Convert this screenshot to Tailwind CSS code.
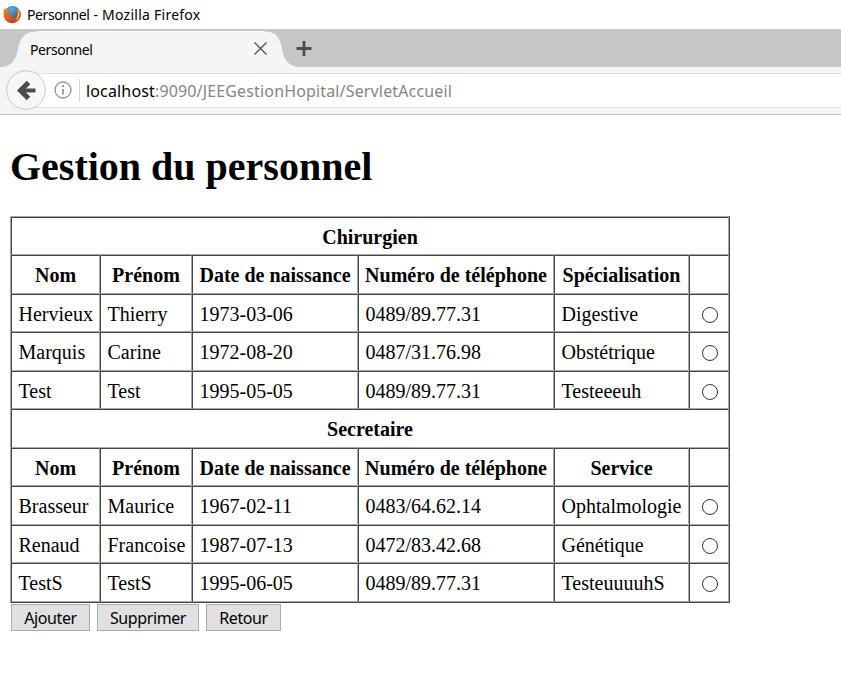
<!DOCTYPE html>
<html lang="fr">
<head>
<meta charset="utf-8">
<title>Personnel</title>
<script src="https://cdn.jsdelivr.net/npm/@tailwindcss/browser@4"></script>
</head>
<body class="w-[841px] h-[681px] overflow-hidden bg-white text-black font-['Noto_Sans',sans-serif]">
<header class="h-[115px] bg-[#f5f5f5] border-b border-[#c2c2c2]">
  <div class="h-[29px] bg-white flex items-center pl-[3px]">
    <svg class="w-[19px] h-[19px] shrink-0" viewBox="0 0 19 19">
      <defs>
        <linearGradient id="fox" x1="0" y1="0" x2="0.6" y2="1"><stop offset="0" stop-color="#f08a24"/><stop offset="0.55" stop-color="#e2601c"/><stop offset="1" stop-color="#b8402a"/></linearGradient>
        <radialGradient id="globe" cx="0.45" cy="0.2" r="0.8"><stop offset="0" stop-color="#58b4e0"/><stop offset="1" stop-color="#173f80"/></radialGradient>
      </defs>
      <circle cx="9.4" cy="9.2" r="8.2" fill="url(#globe)"/>
      <path d="M1 3 L2.6 4.4 L4.4 4 Q5.400 5.400 7 6 Q6.600 7.200 5.400 7.600 Q5.400 9.800 7.800 10.400 Q9.800 10.800 11 10 Q10.400 12.200 8.600 12.600 Q12.600 13.600 14 9.800 Q14.800 6 13.400 2.800 Q16.400 4.600 17 7.400 L17.600 6.400 Q18.600 12 15.200 15.600 Q12 18.800 7.400 18 Q2.400 16.800 0.900 12 Q0 7 1 3Z" fill="url(#fox)"/>
      <path d="M14.2 3.6 Q17 6.600 16.600 10.600 Q15.600 14.400 12.400 15.600 Q15 12 15.200 8.600 Z" fill="#fbc040"/>
    </svg>
    <span class="ml-[5px] text-[14px] leading-[20px] whitespace-nowrap"><span class="tracking-[-0.4px]">Personnel</span><span class="tracking-[0.25px]"> - Mozilla Firefox</span></span>
  </div>
  <div class="h-[38px] bg-[#c6c6c6] grid">
    <svg class="w-[841px] h-[38px] [grid-area:1/1]" viewBox="0 0 841 38">
      <path d="M0 38 C11 38 16 31 18 20 C20 8 25 2.5 38 2.5 L264 2.5 C276 2.5 280 8 282 20 C284 31 289 38 300 38 Z" fill="#f5f5f5"/>
      <path d="M38 2.5 L264 2.5" stroke="#fdfdfd"/>
      <path d="M254.5 13.5 L266.500 25.500 M266.500 13.500 L254.500 25.500" stroke="#555" stroke-width="1.4"/>
      <path d="M304 12 V27 M296.500 19.500 H311.500" stroke="#4c4c4c" stroke-width="2.8"/>
    </svg>
    <span class="[grid-area:1/1] pl-[30px] pt-[11px] text-[14px] leading-[20px] tracking-[-0.4px]">Personnel</span>
  </div>
  <div class="h-[47px] grid">
    <div class="[grid-area:1/1] mt-[6px] ml-[26px] h-[35px] bg-white border-y border-[#dedede]"></div>
    <div class="[grid-area:1/1] flex items-start">
      <svg class="w-[86px] h-[47px] shrink-0" viewBox="0 0 86 47">
        <circle cx="26" cy="23" r="19.300" fill="#f7f7f7" stroke="#c8c8c8"/>
        <path d="M35.500 23.500 H22" fill="none" stroke="#4c4c4c" stroke-width="4"/>
        <path d="M28.500 15.500 L20.500 23.500 L28.500 31.500" fill="none" stroke="#4c4c4c" stroke-width="5"/>
        <circle cx="63" cy="23" r="8" fill="none" stroke="#949494" stroke-width="1.300"/>
        <path d="M63 22 V27.500 M63 18 V20" stroke="#949494" stroke-width="1.800"/>
        <path d="M79.500 12 V35" stroke="#d4d4d4"/>
      </svg>
      <span class="pt-[12px] text-[16px] leading-[24px] whitespace-nowrap text-[#858585] tracking-[0.15px]"><span class="text-black">localhost</span>:9090/JEEGestionHopital/ServletAccueil</span>
    </div>
  </div>
</header>
<main class="pl-[10px] font-['Liberation_Serif',serif]">
  <h1 class="pt-[29px] text-[40px] leading-[46px] font-bold">Gestion du personnel</h1>
  <table class="mt-[26px] w-[720px] table-fixed border-separate border-spacing-0 border border-t-[#a8a8a8] border-l-[#a8a8a8] border-r-[#444] border-b-[#444] text-[20px] leading-[22px] [&_td]:border [&_td]:p-0 [&_td]:pt-[1px] [&_td]:pl-[6.5px] [&_td]:border-t-[#444] [&_td]:border-l-[#444] [&_td]:border-r-[#a8a8a8] [&_td]:border-b-[#a8a8a8] [&_th]:border [&_th]:p-0 [&_th]:pt-[1px] [&_th]:border-t-[#444] [&_th]:border-l-[#444] [&_th]:border-r-[#a8a8a8] [&_th]:border-b-[#a8a8a8] [&_td]:whitespace-nowrap [&_th]:whitespace-nowrap [&_input]:block [&_input]:appearance-none [&_input]:size-[16px] [&_input]:rounded-full [&_input]:border [&_input]:border-[#333] [&_input]:ml-[5.5px] [&_input]:mt-[2px]">
    <colgroup><col class="w-[89px]"><col class="w-[92px]"><col class="w-[166px]"><col class="w-[196px]"><col class="w-[135px]"><col class="w-[40px]"></colgroup>
    <tbody>
    <tr class="h-[38px]"><th colspan="6">Chirurgien</th></tr>
    <tr class="h-[39px]"><th>Nom</th><th>Prénom</th><th>Date de naissance</th><th>Numéro de téléphone</th><th>Spécialisation</th><th></th></tr>
    <tr class="h-[38px]"><td>Hervieux</td><td>Thierry</td><td>1973-03-06</td><td>0489/89.77.31</td><td>Digestive</td><td><input type="radio" name="p"></td></tr>
    <tr class="h-[39px]"><td>Marquis</td><td>Carine</td><td>1972-08-20</td><td>0487/31.76.98</td><td>Obstétrique</td><td><input type="radio" name="p"></td></tr>
    <tr class="h-[38px]"><td>Test</td><td>Test</td><td>1995-05-05</td><td>0489/89.77.31</td><td>Testeeeuh</td><td><input type="radio" name="p"></td></tr>
    <tr class="h-[39px]"><th colspan="6">Secretaire</th></tr>
    <tr class="h-[38px]"><th>Nom</th><th>Prénom</th><th>Date de naissance</th><th>Numéro de téléphone</th><th>Service</th><th></th></tr>
    <tr class="h-[39px]"><td>Brasseur</td><td>Maurice</td><td>1967-02-11</td><td>0483/64.62.14</td><td>Ophtalmologie</td><td><input type="radio" name="p"></td></tr>
    <tr class="h-[38px]"><td>Renaud</td><td>Francoise</td><td>1987-07-13</td><td>0472/83.42.68</td><td>Génétique</td><td><input type="radio" name="p"></td></tr>
    <tr class="h-[39px]"><td>TestS</td><td>TestS</td><td>1995-06-05</td><td>0489/89.77.31</td><td>TesteuuuuhS</td><td><input type="radio" name="p"></td></tr>
    </tbody>
  </table>
  <div class="flex mt-[1px] ml-[1px] font-['Noto_Sans',sans-serif] text-[16px] leading-[24px] tracking-[-0.4px] [&_button]:h-[27px] [&_button]:pt-[1px] [&_button]:border [&_button]:border-[#adadad] [&_button]:bg-[#e1e1e1] [&_button]:flex [&_button]:justify-center">
    <button class="w-[79px]">Ajouter</button>
    <button class="w-[102px] ml-[7px]">Supprimer</button>
    <button class="w-[75px] ml-[7px]">Retour</button>
  </div>
</main>
</body>
</html>
